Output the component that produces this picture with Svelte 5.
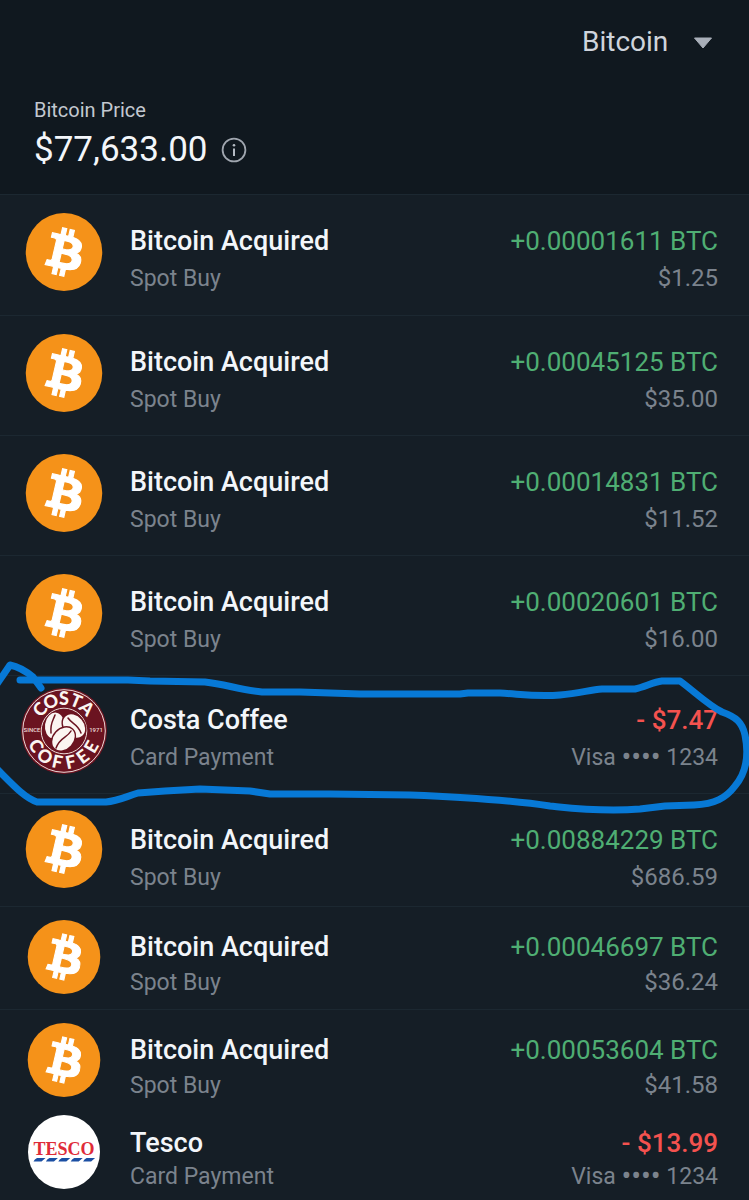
<script>
    let currency = "Bitcoin"

    /** @type {Array.<{kind: string, size: string, title: string, note: string, amount: string, detail: string}>} */
    const transactions = [
        buy("tall first", "+0.00001611 BTC", "$1.25"),
        buy("tall", "+0.00045125 BTC", "$35.00"),
        buy("tall", "+0.00014831 BTC", "$11.52"),
        buy("tall", "+0.00020601 BTC", "$16.00"),
        card("costa", "marked", "Costa Coffee", "- $7.47"),
        buy("medium", "+0.00884229 BTC", "$686.59"),
        buy("compact", "+0.00046697 BTC", "$36.24"),
        buy("compact", "+0.00053604 BTC", "$41.58"),
        card("tesco", "last", "Tesco", "- $13.99")
    ]

    function buy(size, amount, detail) {
        return { kind: "bitcoin", size, title: "Bitcoin Acquired", note: "Spot Buy", amount, detail }
    }

    function card(kind, size, title, amount) {
        return { kind, size, title, note: "Card Payment", amount, detail: "1234" }
    }

    // letters round the coffee badge, with the angle each one sits at
    const upper = [["C", -48], ["O", -24], ["S", 0], ["T", 22], ["A", 45]]
    const lower = [["C", 62], ["O", 37], ["F", 12], ["F", -12], ["E", -36], ["E", -60]]
</script>

<main>
    <header>
        <div class="picker">
            <select bind:value={currency} aria-label="Currency">
                <option>Bitcoin</option>
            </select>
            <svg class="arrow" viewBox="0 0 20 12" aria-hidden="true">
                <path d="M1.5 1h17L10 11z" fill="#a9afb9" stroke="#a9afb9" stroke-linejoin="round" />
            </svg>
        </div>
        <p class="label">Bitcoin Price</p>
        <div class="price">
            <h1>$77,633.00</h1>
            <button aria-label="About this price">
                <svg viewBox="0 0 26 26" aria-hidden="true">
                    <circle cx="13" cy="13" r="11.4" fill="none" stroke="#a0a6af" stroke-width="1.8" />
                    <circle cx="13" cy="8.2" r="1.3" fill="#b4bac3" />
                    <path d="M13 11.5v7.5" stroke="#b4bac3" stroke-width="2" />
                </svg>
            </button>
        </div>
    </header>

    <ul>
        {#each transactions as t}
            <li class={t.size}>
                <div class="avatar">
                    {#if t.kind == "bitcoin"}
                        <svg viewBox="0 0 32 32" aria-hidden="true">
                            <ellipse cx="16" cy="16" rx="15.7" ry="16" fill="#f59219" />
                            <path transform="rotate(-1 16 16)" fill="#fff" stroke="#fff" stroke-width=".45" d="M23.189 14.02c.314-2.096-1.283-3.223-3.465-3.975l.708-2.84-1.728-.43-.69 2.765c-.454-.114-.92-.22-1.385-.326l.695-2.783L15.596 6l-.708 2.839c-.376-.086-.746-.17-1.104-.26l.002-.009-2.384-.595-.46 1.846s1.283.294 1.256.312c.7.175.826.638.805 1.006l-.806 3.235c.048.012.11.03.18.057l-.183-.045-1.13 4.532c-.086.212-.303.531-.793.41.018.025-1.256-.313-1.256-.313l-.858 1.978 2.25.561c.418.105.828.215 1.231.318l-.715 2.872 1.727.43.708-2.84c.472.127.93.245 1.378.357l-.706 2.828 1.728.43.715-2.866c2.948.558 5.164.333 6.097-2.333.752-2.146-.037-3.385-1.588-4.192 1.13-.26 1.98-1.003 2.207-2.538zm-3.95 5.538c-.533 2.147-4.148.986-5.32.695l.95-3.805c1.172.293 4.929.872 4.37 3.11zm.535-5.569c-.487 1.953-3.495.96-4.47.717l.86-3.45c.975.243 4.118.696 3.61 2.733z" />
                        </svg>
                    {:else if t.kind == "costa"}
                        <svg viewBox="0 0 86 86" aria-hidden="true">
                            <circle cx="43" cy="43" r="43" fill="#6b1320" />
                            <circle cx="43" cy="43" r="41.3" fill="none" stroke="#ecd9d7" stroke-width="1" />
                            <circle cx="43" cy="43" r="22.8" fill="none" stroke="#ecd9d7" stroke-width="1" />
                            <g fill="#fbf5f1">
                                <ellipse cx="33.500" cy="37.500" rx="9.5" ry="13" transform="rotate(8 33.5 37.5)" />
                                <ellipse cx="53" cy="38" rx="10.5" ry="13.500" transform="rotate(-40 53 38)" stroke="#6b1320" stroke-width="1.4" />
                                <ellipse cx="42.500" cy="51" rx="10.5" ry="13.500" transform="rotate(42 42.5 51)" stroke="#6b1320" stroke-width="1.4" />
                            </g>
                            <g fill="none" stroke="#6b1320" stroke-width="1.5" stroke-linecap="round">
                                <path d="M34 27c-2 6-5 8-4 18" />
                                <path d="M47 30c4 6 10 6 13 15" />
                                <path d="M50 43c-4 7-11 6-15 17" />
                            </g>
                            {#each upper as [letter, angle]}
                                <text class="ring" x="43" y="17" transform="rotate({angle} 43 43)">{letter}</text>
                            {/each}
                            {#each lower as [letter, angle]}
                                <text class="ring" x="43" y="81" transform="rotate({angle} 43 43)">{letter}</text>
                            {/each}
                            <text class="tiny" x="11" y="44">SINCE</text>
                            <text class="tiny" x="75" y="44">1971</text>
                        </svg>
                    {:else}
                        <svg viewBox="0 0 74 74" aria-hidden="true">
                            <ellipse cx="37" cy="37" rx="36" ry="37" fill="#fff" />
                            <text class="tesco" x="37" y="40">TESCO</text>
                            <path fill="#1b4fa3" d="M10 43h8.500l-4 3.500H6.500q1-2.500 3.500-3.500zM22.400 43h8.500l-4 3.500h-8q1-2.500 3.500-3.500zM34.800 43h8.500l-4 3.500h-8q1-2.500 3.500-3.500zM47.200 43h8.500l-4 3.500h-8q1-2.500 3.500-3.500zM59.600 43h8.500l-4 3.500h-8q1-2.500 3.500-3.500z" />
                        </svg>
                    {/if}
                </div>
                <div class="what">
                    <h2>{t.title}</h2>
                    <p>{t.note}</p>
                </div>
                {#if t.kind == "bitcoin"}
                    <div class="value">
                        <strong>{t.amount}</strong>
                        <p>{t.detail}</p>
                    </div>
                {:else}
                    <div class="value spent">
                        <strong>{t.amount}</strong>
                        <p>Visa <span class="dots">••••</span> {t.detail}</p>
                    </div>
                {/if}
                {#if t.size == "marked"}
                    <!-- hand-drawn loop around the card payment -->
                    <svg class="scribble" viewBox="0 656 749 160" aria-hidden="true">
                        <path d="M-3 684 10 665C20 667 27 672 33 677L41 688" />
                        <path d="M20 680H128L150 681 205 682C225 684 240 690 262 692H300L360 694H460L468 693H500C520 694 535 697 560 695 580 693 590 690 602 689H635C645 687 653 682 662 681H680C695 692 708 705 722 712 736 717 742 722 745 735 749 755 747 772 735 786 726 798 715 804 694 805L665 806 640 809C600 812 570 808 550 806 510 800 460 797 410 795L330 794H270L250 791 200 789 165 791 138 793C125 797 118 801 106 802H37C25 798 15 787 -3 769" />
                    </svg>
                {/if}
            </li>
        {/each}
    </ul>
</main>

<style>
    :global(body) {
        margin: 0;
        background: #151e26;
    }
    main {
        font-family: Roboto, sans-serif;
        color: #f3f6fa;
        overflow: hidden;
    }
    h1, h2, p, ul {
        margin: 0;
        padding: 0;
    }
    header {
        background: #10181f;
        padding: 22px 34px 22px;
    }
    .picker {
        position: relative;
        display: flex;
        justify-content: flex-end;
        margin-bottom: 34px;
    }
    select {
        appearance: none;
        border: 0;
        margin: 0;
        padding: 0 46px 0 0;
        background: transparent;
        color: #cfd4dc;
        font: 400 28px/40px Roboto, sans-serif;
    }
    .arrow {
        position: absolute;
        right: 2px;
        top: 15px;
        width: 20px;
        height: 12px;
        pointer-events: none;
    }
    .label {
        font-size: 20px;
        line-height: 28px;
        color: #c3c8d0;
    }
    .price {
        display: flex;
        align-items: center;
        gap: 14px;
        padding-top: 4px;
    }
    h1 {
        font-size: 35px;
        line-height: 44px;
        font-weight: 400;
    }
    button {
        border: 0;
        padding: 0;
        background: none;
        width: 26px;
        height: 26px;
    }
    button svg {
        display: block;
    }
    ul {
        list-style: none;
    }
    li {
        position: relative;
        box-sizing: border-box;
        display: grid;
        grid-template-columns: 86px 1fr auto;
        column-gap: 23px;
        align-items: start;
        min-height: 120px;
        padding: 18px 31px 0 21px;
        border-top: 1px solid #1c2831;
    }
    .first {
        min-height: 121px;
    }
    .avatar {
        display: flex;
        justify-content: center;
    }
    .avatar svg {
        width: 78px;
        height: 78px;
        overflow: visible;
    }
    .what, .value {
        padding-top: 10px;
    }
    .value {
        text-align: right;
    }
    h2, strong {
        display: block;
        font-size: 27px;
        line-height: 37px;
        font-weight: 500;
    }
    strong {
        font-size: 26px;
        color: #4fae73;
        font-weight: 400;
    }
    .spent strong {
        color: #f4524f;
        font-weight: 500;
    }
    li p {
        font-size: 23px;
        line-height: 37px;
        color: #7b838d;
    }
    .value p {
        font-size: 24px;
    }
    .spent p {
        font-size: 23px;
    }
    .dots {
        font-family: "Noto Sans", sans-serif;
        font-size: 26px;
        line-height: 1;
    }
    .marked {
        min-height: 118px;
        padding-top: 12px;
    }
    .marked .avatar svg {
        width: 86px;
        height: 86px;
    }
    .marked .what, .marked .value {
        padding-top: 14px;
    }
    .medium {
        min-height: 113px;
        padding-top: 16px;
    }
    .medium .what, .medium .value {
        padding-top: 12px;
    }
    .compact {
        min-height: 103px;
        padding-top: 13px;
    }
    .compact .avatar svg, .last .avatar svg {
        width: 74px;
        height: 74px;
    }
    .compact h2, .compact strong, .compact p {
        line-height: 35px;
    }
    .last {
        border-top: 0;
        min-height: 88px;
        padding-top: 3px;
    }
    .last .what, .last .value {
        padding-top: 11px;
    }
    .last h2, .last strong, .last p {
        line-height: 34px;
    }
    .avatar .ring {
        font: 900 18px Lato, sans-serif;
        fill: #fbf5f1;
        text-anchor: middle;
    }
    .avatar .tiny {
        font: 500 6px Roboto, sans-serif;
        fill: #ecd9d7;
        text-anchor: middle;
    }
    .avatar .tesco {
        font: 700 18px "Liberation Serif", serif;
        fill: #df2b38;
        text-anchor: middle;
    }
    .scribble {
        position: absolute;
        left: 0;
        top: -20px;
        width: 100%;
        fill: none;
        stroke: #0779d6;
        stroke-width: 7px;
        stroke-linecap: round;
        stroke-linejoin: round;
        pointer-events: none;
        z-index: 1;
    }
</style>
